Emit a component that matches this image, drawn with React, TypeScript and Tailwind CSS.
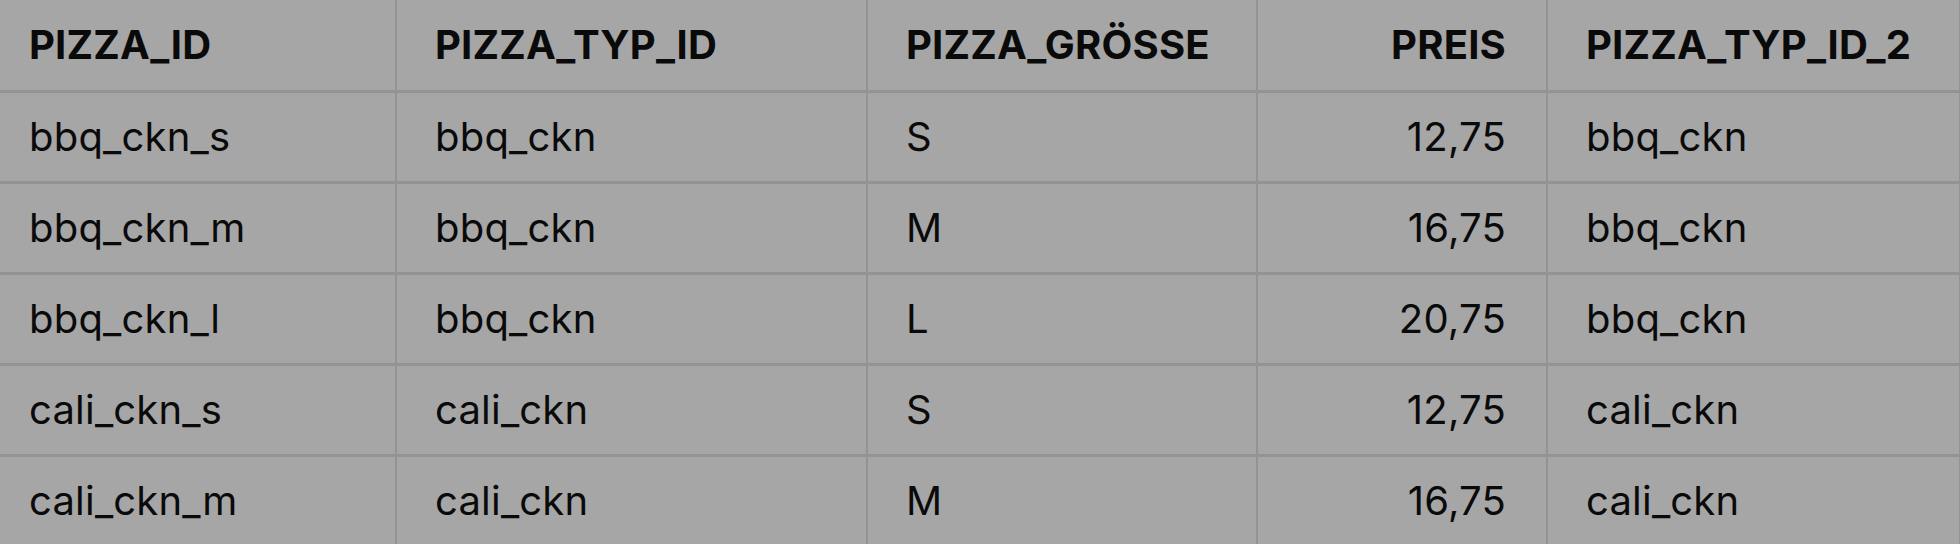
import React from "react";

interface PizzaRow {
    id: string;
    typId: string;
    groesse: string;
    preis: string;
}

const rows: PizzaRow[] = [
    { id: "bbq_ckn_s", typId: "bbq_ckn", groesse: "S", preis: "12,75" },
    { id: "bbq_ckn_m", typId: "bbq_ckn", groesse: "M", preis: "16,75" },
    { id: "bbq_ckn_l", typId: "bbq_ckn", groesse: "L", preis: "20,75" },
    { id: "cali_ckn_s", typId: "cali_ckn", groesse: "S", preis: "12,75" },
    { id: "cali_ckn_m", typId: "cali_ckn", groesse: "M", preis: "16,75" },
];

const cell = "h-[91px] px-[38px] border-r-2 border-b-[3px] border-[#939393] align-middle";

const App: React.FC = () => {
    return (
        <div
            className="w-[1960px] h-[544px] overflow-hidden bg-[#a6a6a6] text-[#0a0a0a]"
            style={{ fontFamily: "Inter, 'Noto Sans', sans-serif" }}
        >
            <table className="border-collapse table-fixed w-[1960px] text-[40px] leading-none tracking-[0.005em]">
                <colgroup>
                    <col className="w-[396px]" />
                    <col className="w-[471px]" />
                    <col className="w-[390px]" />
                    <col className="w-[290px]" />
                    <col className="w-[413px]" />
                </colgroup>
                <thead>
                    <tr className="font-bold">
                        <th className={`${cell} !pl-[29px] text-left`}>PIZZA_ID</th>
                        <th className={`${cell} text-left`}>PIZZA_TYP_ID</th>
                        <th className={`${cell} text-left`}>PIZZA_GRÖSSE</th>
                        <th className={`${cell} !pr-[40px] text-right`}>PREIS</th>
                        <th className={`${cell} text-left border-r-0`}>PIZZA_TYP_ID_2</th>
                    </tr>
                </thead>
                <tbody>
                    {rows.map((row) => (
                        <tr key={row.id}>
                            <td className={`${cell} !pl-[29px]`}>{row.id}</td>
                            <td className={cell}>{row.typId}</td>
                            <td className={cell}>{row.groesse}</td>
                            <td className={`${cell} !pr-[40px] text-right`}>{row.preis}</td>
                            <td className={`${cell} border-r-0`}>{row.typId}</td>
                        </tr>
                    ))}
                </tbody>
            </table>
        </div>
    );
};

export default App;
